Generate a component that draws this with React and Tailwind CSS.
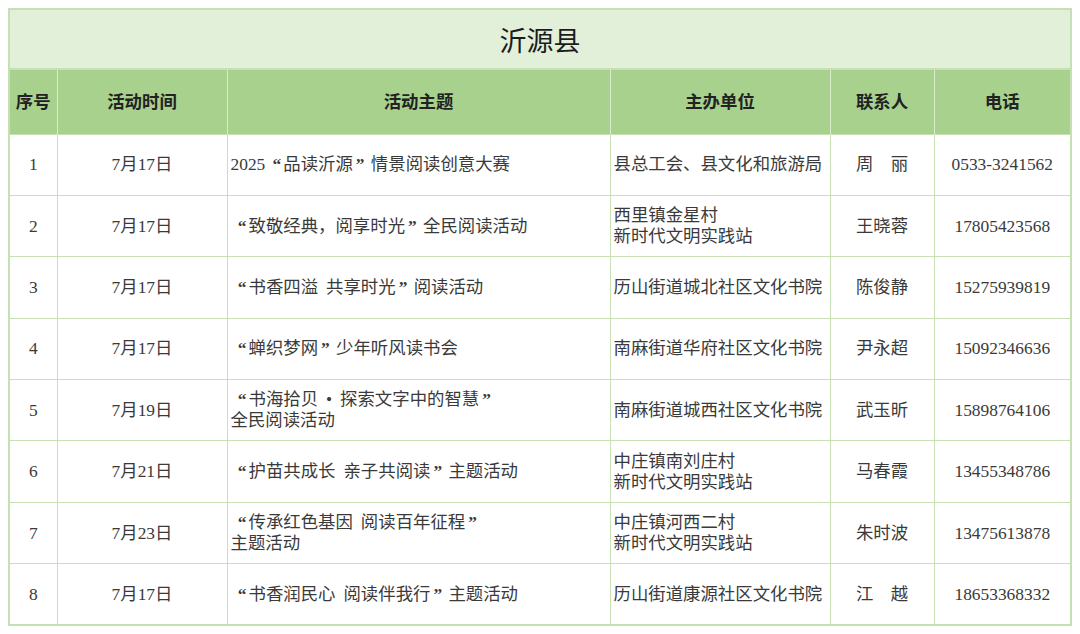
import React from "react";

const rows = [
  ["1", "7月17日", ["2025“品读沂源”情景阅读创意大赛"], ["县总工会、县文化和旅游局"], "周　丽", "0533-3241562"],
  ["2", "7月17日", ["“致敬经典，阅享时光”全民阅读活动"], ["西里镇金星村", "新时代文明实践站"], "王晓蓉", "17805423568"],
  ["3", "7月17日", ["“书香四溢 共享时光”阅读活动"], ["历山街道城北社区文化书院"], "陈俊静", "15275939819"],
  ["4", "7月17日", ["“蝉织梦网”少年听风读书会"], ["南麻街道华府社区文化书院"], "尹永超", "15092346636"],
  ["5", "7月19日", ["“书海拾贝•探索文字中的智慧”", "全民阅读活动"], ["南麻街道城西社区文化书院"], "武玉昕", "15898764106"],
  ["6", "7月21日", ["“护苗共成长 亲子共阅读”主题活动"], ["中庄镇南刘庄村", "新时代文明实践站"], "马春霞", "13455348786"],
  ["7", "7月23日", ["“传承红色基因 阅读百年征程”", "主题活动"], ["中庄镇河西二村", "新时代文明实践站"], "朱时波", "13475613878"],
  ["8", "7月17日", ["“书香润民心 阅读伴我行”主题活动"], ["历山街道康源社区文化书院"], "江　越", "18653368332"],
];

function Q({ text }) {
  const parts = text.split(/([“” •])/);
  return (
    <>
      {parts.map((p, i) => {
        if (p === "“")
          return (
            <span key={i} className="inline-block w-[18px] text-right pr-[2px] font-bold">“</span>
          );
        if (p === "”")
          return (
            <span key={i} className="inline-block w-[18px] text-left pl-[3px] font-bold">”</span>
          );
        if (p === " ")
          return <span key={i} className="inline-block w-[8px]"></span>;
        if (p === "•")
          return (
            <span key={i} className="inline-block w-[22px] text-center">•</span>
          );
        return <React.Fragment key={i}>{p}</React.Fragment>;
      })}
    </>
  );
}

const cellBorder = "border border-[#c8e2b6]";

export default function App() {
  return (
    <div className="w-[1080px] h-[634px] bg-white pt-[8px] pl-[8px]">
      <table
        className="border-collapse table-fixed w-[1062px] border-2 border-[#c5e0b4] text-[#3a3a3a]"
        style={{ fontFamily: '"Liberation Serif", "Noto Sans CJK SC", serif' }}
      >
        <colgroup>
          <col className="w-[48px]" />
          <col className="w-[170px]" />
          <col className="w-[383px]" />
          <col className="w-[220px]" />
          <col className="w-[104px]" />
          <col className="w-[137px]" />
        </colgroup>
        <thead>
          <tr className="h-[60px] bg-[#e2f0d9]">
            <th
              colSpan={6}
              className="border-2 border-[#c5e0b4] text-[27px] font-normal text-[#1c1c1c] text-center pt-[2px]"
              style={{ fontFamily: '"Noto Sans CJK SC", sans-serif' }}
            >
              沂源县
            </th>
          </tr>
          <tr className="h-[65px] bg-[#a9d18e] text-[17.4px] text-[#222]">
            {["序号", "活动时间", "活动主题", "主办单位", "联系人", "电话"].map((h) => (
              <th key={h} className="border-x border-[#d9ecc9] text-center font-semibold">
                {h}
              </th>
            ))}
          </tr>
        </thead>
        <tbody className="text-[17.4px] leading-[21px]">
          {rows.map((r) => (
            <tr key={r[0]} className="h-[61.4px]">
              <td className={`${cellBorder} text-center`}>{r[0]}</td>
              <td className={`${cellBorder} text-center`}>{r[1]}</td>
              <td className={`${cellBorder} text-left pl-[3px] whitespace-nowrap`}>
                {r[2].map((l, i) => (
                  <div key={i}>
                    <Q text={l} />
                  </div>
                ))}
              </td>
              <td className={`${cellBorder} text-left pl-[3px] whitespace-nowrap`}>
                {r[3].map((l, i) => (
                  <div key={i}>{l}</div>
                ))}
              </td>
              <td className={`${cellBorder} text-center whitespace-nowrap`}>{r[4]}</td>
              <td className={`${cellBorder} text-center`}>{r[5]}</td>
            </tr>
          ))}
        </tbody>
      </table>
    </div>
  );
}
